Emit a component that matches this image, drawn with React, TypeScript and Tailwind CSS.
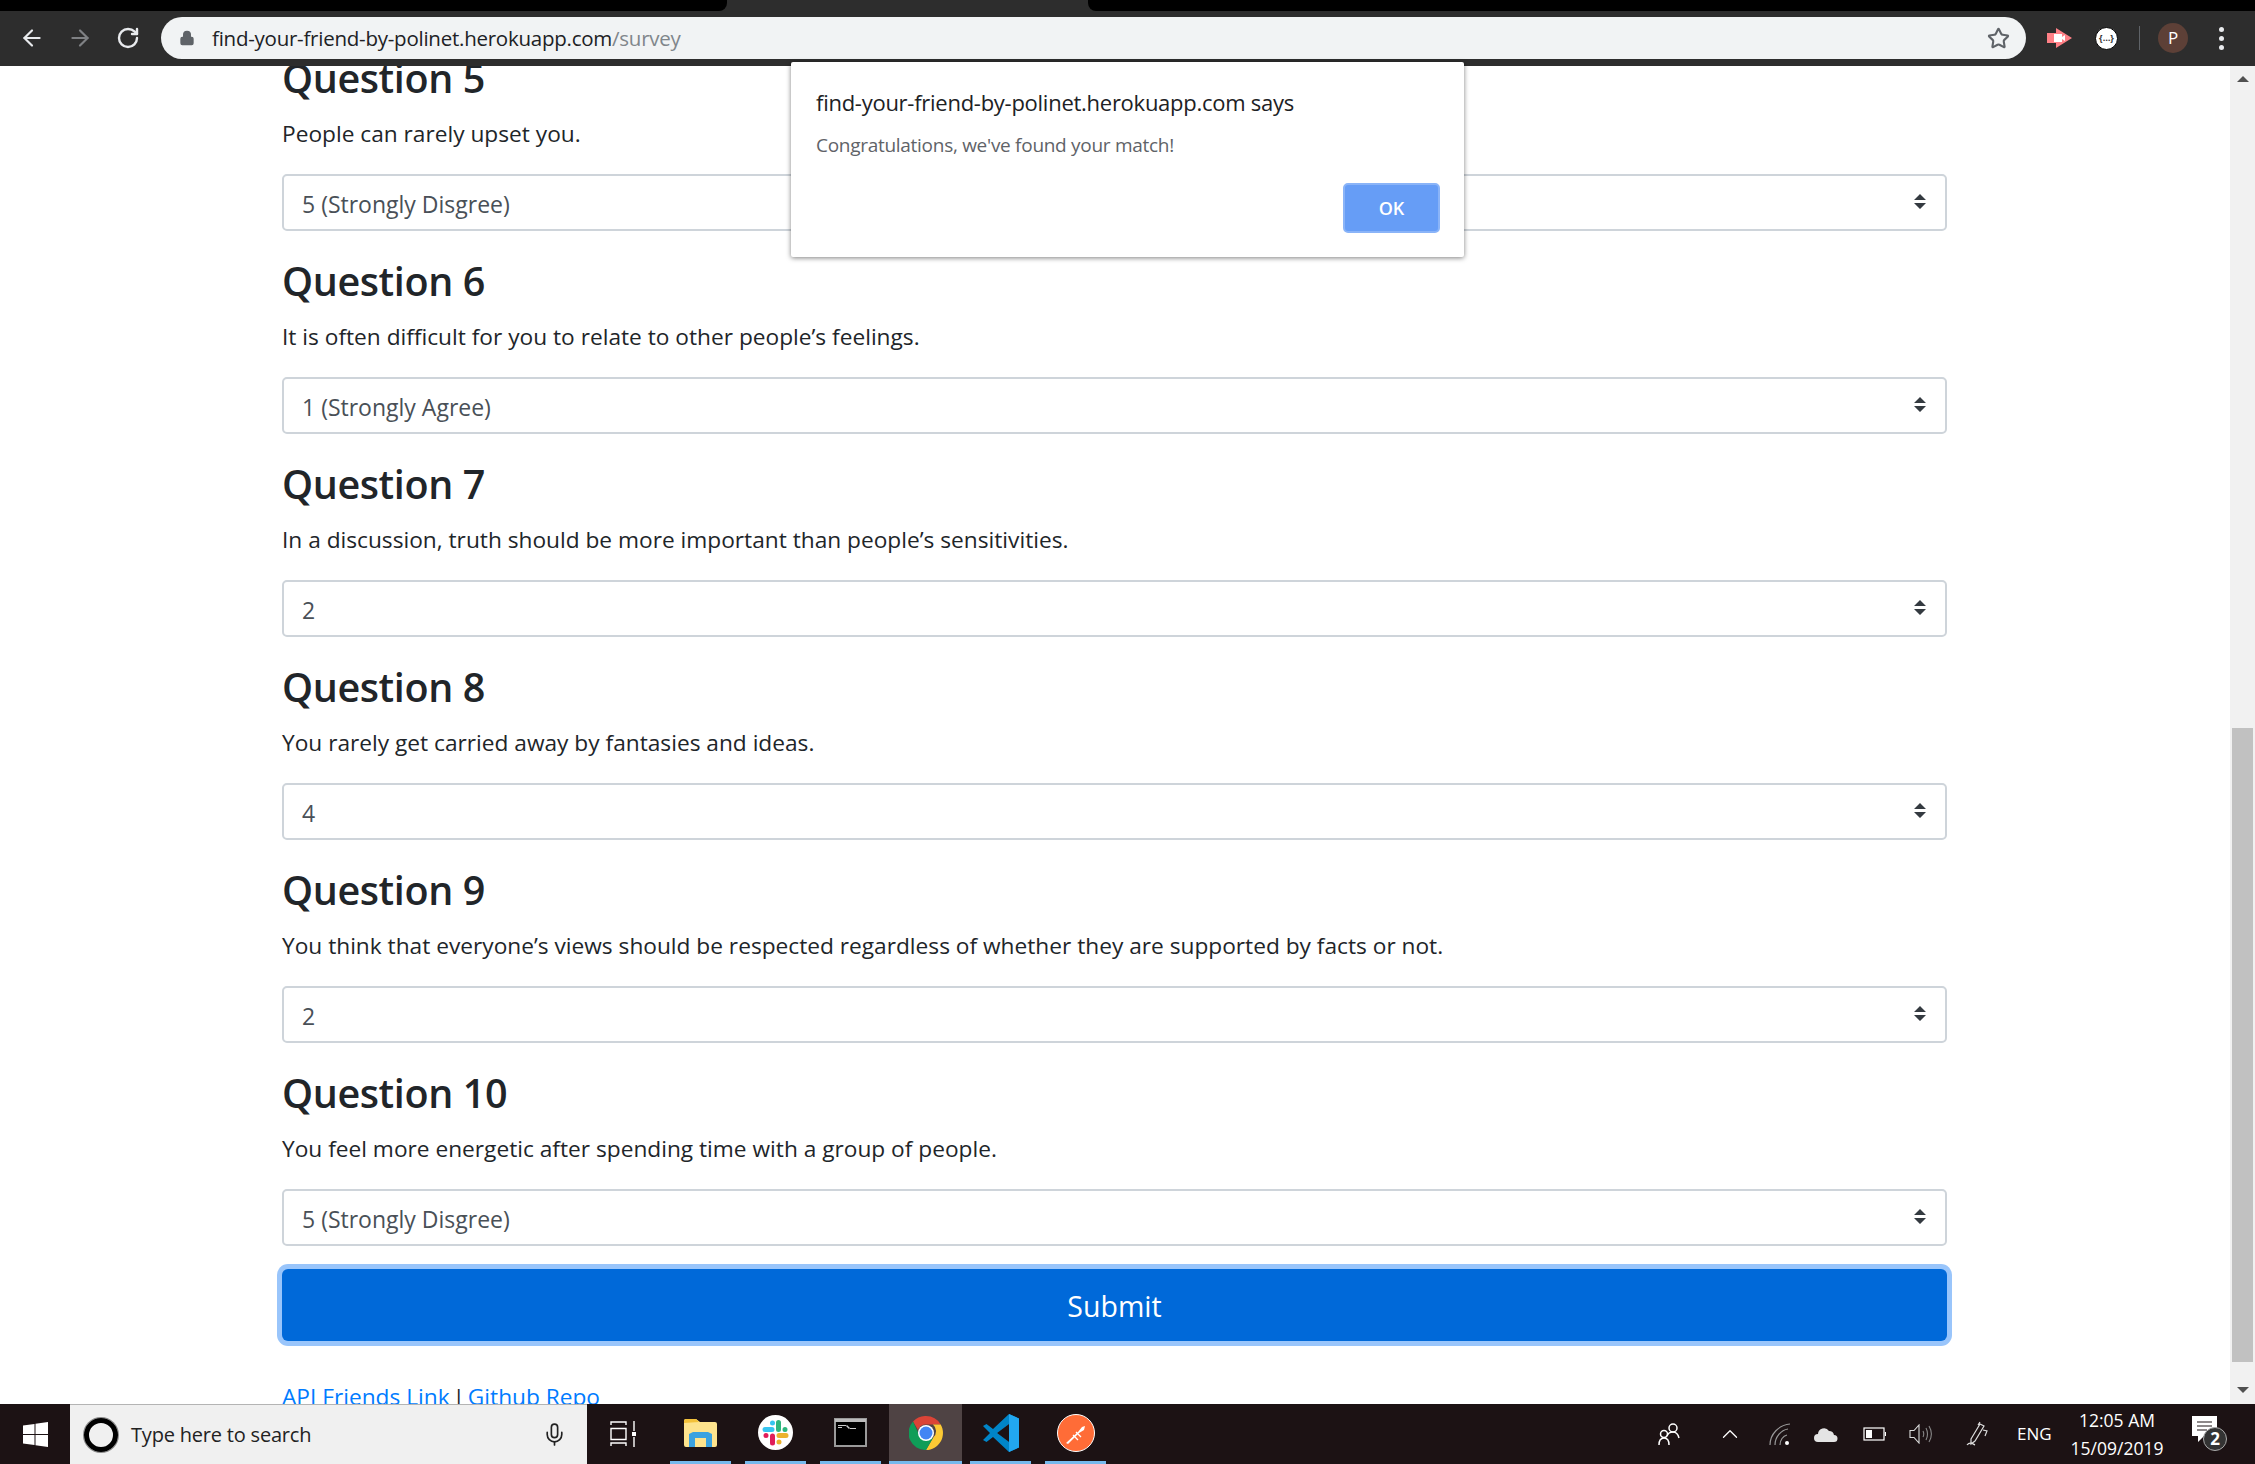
import { ArrowLeft, ArrowRight, RotateCw, Star, Lock, Mic, ChevronUp } from 'lucide-react'

const font = { fontFamily: '"Open Sans", "Noto Sans", sans-serif' }

const questions = [
  { title: 'Question 5', text: 'People can rarely upset you.', value: '5 (Strongly Disgree)' },
  { title: 'Question 6', text: 'It is often difficult for you to relate to other people’s feelings.', value: '1 (Strongly Agree)' },
  { title: 'Question 7', text: 'In a discussion, truth should be more important than people’s sensitivities.', value: '2' },
  { title: 'Question 8', text: 'You rarely get carried away by fantasies and ideas.', value: '4' },
  { title: 'Question 9', text: 'You think that everyone’s views should be respected regardless of whether they are supported by facts or not.', value: '2' },
  { title: 'Question 10', text: 'You feel more energetic after spending time with a group of people.', value: '5 (Strongly Disgree)' },
]

function SelectArrows() {
  return (
    <svg width="12" height="15" viewBox="0 0 12 15" className="mb-[2px] fill-[#343a40]">
      <path d="M6 0l6 6H0zM6 15l6-6H0z" />
    </svg>
  )
}

function Question({ title, text, value }: { title: string; text: string; value: string }) {
  return (
    <section className="mb-[23px]">
      <h2 className="h-[55px] text-[39.5px] leading-[55px] font-semibold text-[#212529] tracking-[-0.01em]">{title}</h2>
      <p className="mt-[10px] mb-[23px] h-[35px] text-[22.7px] leading-[35px] text-[#212529]">{text}</p>
      <div className="flex h-[57px] items-center justify-between rounded-[5px] border-2 border-[#ced4da] bg-white pr-[19px] pl-[18px] text-[23px] text-[#495057]">
        <span className="pt-[3px]">{value}</span>
        <SelectArrows />
      </div>
    </section>
  )
}

function TopBar() {
  return (
    <header className="flex h-[66px] shrink-0 flex-col bg-[#2d2d2d]">
      <div className="flex h-[11px] shrink-0">
        <div className="w-[727px] rounded-br-lg bg-black" />
        <div className="w-[361px]" />
        <div className="flex-1 rounded-bl-lg bg-black" />
      </div>
      <div className="flex h-[42px] mt-[6px] items-center">
        <div className="flex w-[161px] shrink-0 items-center pl-[19px]">
          <ArrowLeft size={26} className="text-[#e8eaed]" strokeWidth={2} />
          <ArrowRight size={26} className="ml-[22px] text-[#7f8184]" strokeWidth={2} />
          <RotateCw size={24} className="ml-[23px] text-[#e8eaed]" strokeWidth={2.4} />
        </div>
        <div className="flex h-[42px] w-[1865px] items-center rounded-full bg-[#f1f3f4] pl-[18px] pr-[16px]">
          <Lock size={16} className="fill-[#5f6368] text-[#5f6368]" />
          <span className="ml-[17px] flex-1 text-[20.5px] text-[#202124] tracking-[-0.012em]">
            find-your-friend-by-polinet.herokuapp.com<span className="text-[#80868b]">/survey</span>
          </span>
          <Star size={23} className="text-[#5f6368]" strokeWidth={2.2} />
        </div>
        <div className="flex flex-1 items-center">
          <svg width="26" height="20" viewBox="0 0 26 20" className="ml-[21px]">
            <path d="M0 5h9V0l16 10-16 10v-5H0z" fill="#ff8086" />
            <path d="M7 6h8v3l3-2v6l-3-2v3H7z" fill="#fff" />
          </svg>
          <div className="ml-[22px] flex h-[23px] w-[23px] items-center justify-center rounded-full border border-black bg-white text-[9px] font-bold text-[#333]">
            {'{…}'}
          </div>
          <div className="ml-[21px] h-[24px] w-px bg-[#5f6368]" />
          <div className="ml-[18px] flex h-[30px] w-[30px] items-center justify-center rounded-full bg-[#5d4037] text-[17px] text-white">P</div>
          <div className="ml-[31px] flex flex-col gap-[4px]">
            <span className="h-[5px] w-[5px] rounded-full bg-[#e8eaed]" />
            <span className="h-[5px] w-[5px] rounded-full bg-[#e8eaed]" />
            <span className="h-[5px] w-[5px] rounded-full bg-[#e8eaed]" />
          </div>
        </div>
      </div>
    </header>
  )
}

function Scrollbar() {
  return (
    <div className="flex w-[25px] shrink-0 flex-col items-center bg-[#f1f1f1]">
      <svg width="12" height="6" viewBox="0 0 12 6" className="mt-[10px] fill-[#505050]"><path d="M6 0l6 6H0z" /></svg>
      <div className="mt-[646px] h-[634px] w-[21px] bg-[#c1c1c1]" />
      <svg width="12" height="6" viewBox="0 0 12 6" className="mt-[25px] fill-[#505050]"><path d="M0 0h12L6 6z" /></svg>
    </div>
  )
}

function AlertDialog() {
  return (
    <div className="absolute top-[62px] left-[791px] h-[195px] w-[673px] rounded-[2px] bg-white pt-[26px] pr-[24px] pl-[25px] shadow-[0_1px_5px_rgba(0,0,0,0.5)]">
      <div className="text-[22px] leading-[28px] text-[#202124] tracking-[-0.012em]">find-your-friend-by-polinet.herokuapp.com says</div>
      <div className="mt-[15px] text-[19px] leading-[28px] text-[#5f6368] tracking-[-0.015em]">Congratulations, we've found your match!</div>
      <div className="mt-[24px] flex justify-end">
        <div className="flex h-[50px] w-[97px] items-center justify-center rounded-[5px] border-2 border-[#8ab4f8] bg-[#669df6] text-[18px] font-semibold text-white">OK</div>
      </div>
    </div>
  )
}

function AppIcon({ active, children }: { active?: boolean; children: React.ReactNode }) {
  return (
    <div className={active ? 'mx-px flex h-full w-[73px] items-center justify-center border-b-[3px] border-[#76b9ed] bg-[#4f4344]' : 'mx-[7px] flex h-full w-[61px] items-center justify-center border-b-[3px] border-[#76b9ed]'}>
      {children}
    </div>
  )
}

function Taskbar() {
  return (
    <footer className="flex h-[60px] shrink-0 items-center bg-[#1c1214] text-white">
      <div className="flex h-full w-[70px] shrink-0 items-center justify-center">
        <svg width="25" height="25" viewBox="0 0 25 25" className="fill-white">
          <path d="M0 3.500l11.500-1.600V12H0zM12.500 1.800L25 0v12H12.500zM0 13h11.500v10.100L0 21.500zM12.500 13H25v12l-12.500-1.800z" />
        </svg>
      </div>
      <div className="flex h-full w-[517px] shrink-0 items-center border-t border-[#b4b4b4] bg-[#f0f0f0] pl-[14px] pr-[20px] text-[#222]">
        <div className="h-[34px] w-[34px] rounded-full border-[5px] border-black shadow-[0_0_0_1px_#888]" />
        <span className="ml-[13px] flex-1 text-[20px] tracking-[-0.01em]">Type here to search</span>
        <Mic size={25} strokeWidth={1.6} />
      </div>
      <div className="flex w-[70px] shrink-0 justify-center pl-[2px]">
        <svg width="26" height="26" viewBox="0 0 26 26" fill="none" stroke="#fff" strokeWidth="1.4">
          <path d="M1 4V1h15v3M1 7.500h15v11H1zM1 25v-3h15v3M24 0v10M24 16v10" />
          <rect x="22" y="11" width="4" height="4" fill="#fff" stroke="none" />
        </svg>
      </div>
      <div className="flex h-full items-center pl-[6px]">
        <AppIcon>
          <svg width="33" height="28" viewBox="0 0 33 28">
            <path d="M0 2a2 2 0 012-2h10l4 3h15a2 2 0 012 2v21a2 2 0 01-2 2H2a2 2 0 01-2-2z" fill="#fde38d" />
            <path d="M0 2a2 2 0 012-2h10l3 3-15 1z" fill="#f3c13a" />
            <path d="M5 28V15L9 13h15l4 2v13h-6v-9H11v9z" fill="#3aa2e0" />
          </svg>
        </AppIcon>
        <AppIcon>
          <svg width="35" height="35" viewBox="0 0 35 35">
            <circle cx="17.500" cy="17.500" r="17.500" fill="#fff" />
            <g strokeWidth="5" strokeLinecap="round">
              <path d="M7 14.500h7M14.500 8h0" stroke="#36c5f0" />
              <path d="M20.500 7.500v7M27 14.500h0" stroke="#2eb67d" />
              <path d="M21 20.500h7M21 27h0" stroke="#ecb22e" />
              <path d="M14.500 21v7M8 20.500h0" stroke="#e01e5a" />
            </g>
          </svg>
        </AppIcon>
        <AppIcon>
          <svg width="33" height="29" viewBox="0 0 33 29">
            <rect width="33" height="29" fill="#9a9a9a" />
            <rect x="1" y="1" width="31" height="3" fill="#bcbcbc" />
            <rect x="2" y="4" width="29" height="23" fill="#000" />
            <path d="M4 7h8v1H4zM13 7l3 3-1 1-3-3zM4 9h4v1H4zM16 10h6v1h-6z" fill="#ccc" />
          </svg>
        </AppIcon>
        <AppIcon active>
          <svg width="34" height="34" viewBox="0 0 34 34">
            <path d="M17 0a17 17 0 0114.700 8.500H17a8.500 8.500 0 00-8 5.500L4 5.500A17 17 0 0117 0z" fill="#db4437" />
            <path d="M31.700 8.500A17 17 0 0117 34l7.400-12.800a8.500 8.500 0 00-.5-12.700z" fill="#fcc934" />
            <path d="M17 34A17 17 0 014 5.500L10.700 20a8.500 8.500 0 0013.700 1.200z" fill="#0f9d58" />
            <circle cx="17" cy="17" r="8" fill="#fff" />
            <circle cx="17" cy="17" r="6.500" fill="#4285f4" />
          </svg>
        </AppIcon>
        <AppIcon>
          <svg width="36" height="38" viewBox="0 0 36 38">
            <path d="M26 0l10 4.500v29L26 38 10 23l-6.500 5L0 26l7-7-7-7 3.500-2 6.500 5z" fill="#0085c8" />
            <path d="M26 0l10 4.500v29L26 38zM26 10L14 19l12 9z" fill="#22a7f0" />
            <path d="M26 10L14 19l12 9z" fill="#1c1214" />
          </svg>
        </AppIcon>
        <AppIcon>
          <svg width="38" height="38" viewBox="0 0 38 38">
            <circle cx="19" cy="19" r="18.500" fill="#ff6c37" stroke="#fff" />
            <path d="M9 29l12-11 4-5 3-1-1 4-5 3-11 11z" fill="#fff" />
            <path d="M16 21l5 5M19 18l5 5" stroke="#fff" strokeWidth="1.300" />
          </svg>
        </AppIcon>
      </div>
      <div className="ml-auto flex h-full items-center pr-[5px]">
        <svg width="22" height="24" viewBox="0 0 22 24" fill="none" stroke="#fff" strokeWidth="1.500" className="mr-[37px]">
          <circle cx="15" cy="6" r="4" />
          <path d="M9 14c1-3 3-4 6-4s5 2 6 6" />
          <circle cx="6" cy="12" r="3.500" />
          <path d="M1 23c0-5 2-7 5-7s5 2 5 7" />
        </svg>
        <ChevronUp size={26} strokeWidth={1.2} className="mr-[26px]" />
        <svg width="22" height="22" viewBox="0 0 22 22" fill="none" stroke="#999" strokeWidth="1.200" className="mr-[23px]">
          <path d="M1 22C1 11 10 2 21 1M6 22C6 14 12 7 19 6M11 22c0-5 3-9 7-10" />
          <circle cx="18" cy="20" r="2" fill="#fff" stroke="none" />
        </svg>
        <svg width="24" height="16" viewBox="0 0 24 16" className="mr-[25px] fill-[#e4e4e4]">
          <path d="M4 16a4 4 0 010-8 6 6 0 0111-3 5 5 0 015 4 3.500 3.500 0 010 7z" />
        </svg>
        <svg width="23" height="14" viewBox="0 0 23 14" fill="none" stroke="#fff" strokeWidth="1.200" className="mr-[23px]">
          <rect x="1" y="1" width="20" height="12" />
          <rect x="3" y="3" width="6" height="8" fill="#fff" stroke="none" />
          <path d="M22.500 5v4" />
        </svg>
        <svg width="24" height="20" viewBox="0 0 24 20" fill="none" stroke="#ddd" strokeWidth="1.100" className="mr-[33px]">
          <path d="M1 6.500h4L10 1v18l-5-5.500H1z" />
          <path d="M14 7c1 2 1 4 0 6M17 4c2 4 2 8 0 12M20 2c3 5 3 11 0 16" stroke="#888" />
        </svg>
        <svg width="22" height="26" viewBox="0 0 22 26" fill="none" stroke="#ddd" strokeWidth="1.200" className="mr-[29px]">
          <path d="M5 18L14 3l4 2-9 15-4 3zM12 4l2-3M17 9l4 1-2 5" />
          <path d="M1 24c3-4 6-1 8 0" />
        </svg>
        <span className="w-[34px] text-center text-[17px]">ENG</span>
        <div className="ml-[11px] flex w-[110px] flex-col items-center text-[17.500px] leading-[28px]">
          <span>12:05 AM</span>
          <span>15/09/2019</span>
        </div>
        <div className="relative ml-[20px] mr-[30px] h-[36px] w-[28px]">
          <svg width="25" height="26" viewBox="0 0 25 26" className="fill-white">
            <path d="M0 0h25v20H12l-6 6v-6H0z" />
            <path d="M5 6h15M5 10h15M5 14h10" stroke="#1c1214" strokeWidth="1.200" />
          </svg>
          <div className="absolute top-[11px] left-[11px] flex h-[24px] w-[24px] items-center justify-center rounded-full border border-[#aaa] bg-[#333] text-[17px] font-bold text-white">2</div>
        </div>
      </div>
    </footer>
  )
}

export default function App() {
  return (
    <div className="relative flex h-[1464px] w-[2255px] flex-col overflow-hidden bg-white" style={font}>
      <TopBar />
      <div className="flex min-h-0 flex-1">
        <main className="flex-1 overflow-hidden">
          <div className="mt-[-15px] mr-[283px] ml-[282px]">
            {questions.map((q) => (
              <Question key={q.title} {...q} />
            ))}
            <div className="mt-[1px] flex h-[72px] items-center justify-center rounded-[6px] bg-[#0069d9] pt-[3px] text-[28.500px] text-white shadow-[0_0_0_5px_#99c5fb]">
              Submit
            </div>
            <p className="mt-[38px] text-[22.7px] leading-[35px] text-[#212529]">
              <span className="text-[#007bff]">API Friends Link</span>
              <span className="mx-[-3px]"> | </span>
              <span className="text-[#007bff]">Github Repo</span>
            </p>
          </div>
        </main>
        <Scrollbar />
      </div>
      <Taskbar />
      <AlertDialog />
    </div>
  )
}
